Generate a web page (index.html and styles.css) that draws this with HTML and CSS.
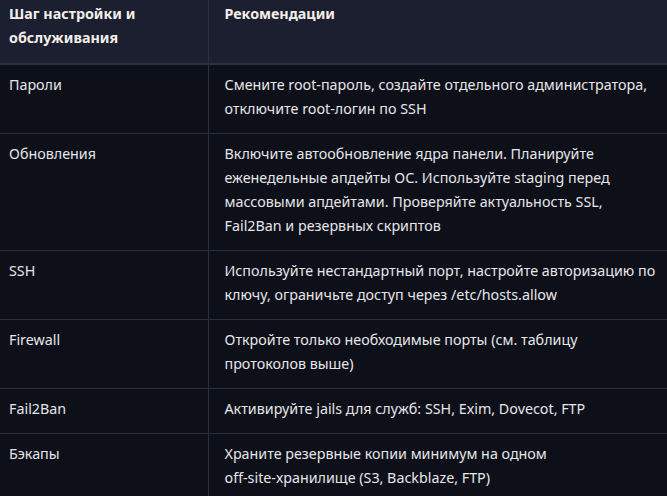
FILE: index.html
```html
<!DOCTYPE html>
<html lang="ru">
<head>
<meta charset="utf-8">
<link rel="stylesheet" href="styles.css">
</head>
<body>
<table class="tbl">
  <thead>
    <tr>
      <th class="c1">Шаг настройки и<br>обслуживания</th>
      <th class="c2">Рекомендации</th>
    </tr>
  </thead>
  <tbody>
    <tr>
      <td class="c1">Пароли</td>
      <td class="c2">Смените root-пароль, создайте отдельного администратора,<br>отключите root-логин по SSH</td>
    </tr>
    <tr>
      <td class="c1">Обновления</td>
      <td class="c2">Включите автообновление ядра панели. Планируйте<br>еженедельные апдейты ОС. Используйте staging перед<br>массовыми апдейтами. Проверяйте актуальность SSL,<br>Fail2Ban и резервных скриптов</td>
    </tr>
    <tr>
      <td class="c1">SSH</td>
      <td class="c2">Используйте нестандартный порт, настройте авторизацию по<br>ключу, ограничьте доступ через /etc/hosts.allow</td>
    </tr>
    <tr>
      <td class="c1">Firewall</td>
      <td class="c2">Откройте только необходимые порты (см. таблицу<br>протоколов выше)</td>
    </tr>
    <tr>
      <td class="c1">Fail2Ban</td>
      <td class="c2">Активируйте jails для служб: SSH, Exim, Dovecot, FTP</td>
    </tr>
    <tr>
      <td class="c1">Бэкапы</td>
      <td class="c2">Храните резервные копии минимум на одном<br>off-site-хранилище (S3, Backblaze, FTP)</td>
    </tr>
  </tbody>
</table>
</body>
</html>
```
FILE: styles.css
```css
html, body {
  margin: 0;
  padding: 0;
  background: #0e1019;
  overflow: hidden;
}
body {
  font-family: "Noto Sans", "Open Sans", sans-serif;
  font-size: 14.3px;
  line-height: 24px;
  color: #e6e6e8;
}
.tbl {
  border-collapse: collapse;
  width: 690px;
  table-layout: fixed;
}
.tbl th, .tbl td {
  text-align: left;
  vertical-align: top;
  padding: 8px 16px 12px;
  border-bottom: 1px solid #2a2e3f;
  white-space: nowrap;
}
.tbl .c1 {
  width: 208px;
  box-sizing: border-box;
  padding-left: 9px;
  border-right: 1px solid #2a2e3f;
}
.tbl th {
  background: #1c1f30;
  color: #f3eee9;
  font-weight: 700;
  padding-top: 2px;
  padding-bottom: 13px;
  border-bottom: 2px solid #2c3044;
}
.tbl td {
  background: #0e1019;
}
```
